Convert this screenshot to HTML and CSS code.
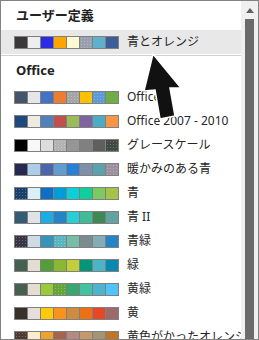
FILE: index.html
```html
<!DOCTYPE html>
<html>
  <head>
    <title>配色</title>
    <link rel="stylesheet" href="styles.css">
  </head>
  <body>
    <div class="picker">
      <div class="list">
        <div class="group-title">ユーザー定義</div>
        <div class="row selected">
          <div class="swatches">
            <span style="background:#3b3838"></span>
            <span style="background:#eeeeee"></span>
            <span style="background:#2b2be6"></span>
            <span style="background:#ffa500"></span>
            <span style="background:#fffbd0"></span>
            <span class="dots" style="background-color:#9a9fae"></span>
            <span style="background:#5fb0cc"></span>
            <span style="background:#3c5d9a"></span>
          </div>
          <span class="name">青とオレンジ</span>
        </div>
        <div class="divider"></div>

        <div class="group-title">Office</div>
        <div class="row">
          <div class="swatches">
            <span style="background:#44546a"></span>
            <span style="background:#e7e6e6"></span>
            <span style="background:#4472c4"></span>
            <span style="background:#ed7d31"></span>
            <span class="dots" style="background-color:#a5a5a5"></span>
            <span style="background:#ffc000"></span>
            <span class="dots" style="background-color:#5b9bd5"></span>
            <span style="background:#70ad47"></span>
          </div>
          <span class="name">Office</span>
        </div>
        <div class="row">
          <div class="swatches">
            <span style="background:#1f497d"></span>
            <span style="background:#eeece1"></span>
            <span style="background:#4f81bd"></span>
            <span style="background:#c0504d"></span>
            <span style="background:#9bbb59"></span>
            <span style="background:#8064a2"></span>
            <span style="background:#4bacc6"></span>
            <span style="background:#f79646"></span>
          </div>
          <span class="name">Office 2007 - 2010</span>
        </div>
        <div class="row">
          <div class="swatches">
            <span style="background:#000000"></span>
            <span style="background:#f8f8f8"></span>
            <span style="background:#dddddd"></span>
            <span class="dots" style="background-color:#b2b2b2"></span>
            <span style="background:#969696"></span>
            <span style="background:#808080"></span>
            <span style="background:#5f5f5f"></span>
            <span class="dots" style="background-color:#3e4a42"></span>
          </div>
          <span class="name">グレースケール</span>
        </div>
        <div class="row">
          <div class="swatches">
            <span style="background:#242852"></span>
            <span style="background:#acccea"></span>
            <span style="background:#4a66ac"></span>
            <span style="background:#629dd1"></span>
            <span style="background:#297fd5"></span>
            <span style="background:#7f8fa9"></span>
            <span style="background:#5aa2ae"></span>
            <span class="dots" style="background-color:#9d90a0"></span>
          </div>
          <span class="name">暖かみのある青</span>
        </div>
        <div class="row">
          <div class="swatches">
            <span class="dots" style="background-color:#17406d"></span>
            <span style="background:#dbeff9"></span>
            <span style="background:#0f6fc6"></span>
            <span style="background:#009dd9"></span>
            <span style="background:#0bd0d9"></span>
            <span style="background:#10cf9b"></span>
            <span style="background:#7cca62"></span>
            <span style="background:#a5c249"></span>
          </div>
          <span class="name">青</span>
        </div>
        <div class="row">
          <div class="swatches">
            <span style="background:#335b74"></span>
            <span style="background:#dfe3e5"></span>
            <span style="background:#1cade4"></span>
            <span style="background:#2683c6"></span>
            <span style="background:#27ced7"></span>
            <span style="background:#42ba97"></span>
            <span style="background:#3e8853"></span>
            <span style="background:#62a39f"></span>
          </div>
          <span class="name">青 II</span>
        </div>
        <div class="row">
          <div class="swatches">
            <span class="dots" style="background-color:#373545"></span>
            <span style="background:#cedbe6"></span>
            <span style="background:#3494ba"></span>
            <span class="dots" style="background-color:#58b6c0"></span>
            <span style="background:#75bda7"></span>
            <span style="background:#7a8c8e"></span>
            <span style="background:#84acb6"></span>
            <span style="background:#2683c6"></span>
          </div>
          <span class="name">青緑</span>
        </div>
        <div class="row">
          <div class="swatches">
            <span style="background:#455f51"></span>
            <span style="background:#e3ded1"></span>
            <span style="background:#549e39"></span>
            <span style="background:#8ab833"></span>
            <span style="background:#c0cf3a"></span>
            <span style="background:#029676"></span>
            <span style="background:#4ab5c4"></span>
            <span style="background:#0989b1"></span>
          </div>
          <span class="name">緑</span>
        </div>
        <div class="row">
          <div class="swatches">
            <span style="background:#455f51"></span>
            <span style="background:#e3ded1"></span>
            <span style="background:#99cb38"></span>
            <span class="dots" style="background-color:#63a537"></span>
            <span style="background:#37a76f"></span>
            <span style="background:#44c1a3"></span>
            <span style="background:#4eb3cf"></span>
            <span style="background:#51c3f9"></span>
          </div>
          <span class="name">黄緑</span>
        </div>
        <div class="row">
          <div class="swatches">
            <span style="background:#39302a"></span>
            <span style="background:#e5dedb"></span>
            <span style="background:#ffca08"></span>
            <span style="background:#f8931d"></span>
            <span style="background:#ce8d3e"></span>
            <span style="background:#ec7016"></span>
            <span style="background:#e64823"></span>
            <span style="background:#9c6a6a"></span>
          </div>
          <span class="name">黄</span>
        </div>
        <div class="row">
          <div class="swatches">
            <span class="dots" style="background-color:#4e3b30"></span>
            <span style="background:#fbeec9"></span>
            <span style="background:#f0a22e"></span>
            <span style="background:#a5644e"></span>
            <span style="background:#b58b80"></span>
            <span style="background:#c3986d"></span>
            <span style="background:#a19574"></span>
            <span style="background:#c17529"></span>
          </div>
          <span class="name">黄色がかったオレンジ</span>
        </div>
      </div>

      <div class="scrollbar">
        <div class="arrow-up"></div>
        <div class="thumb"></div>
      </div>

      <!-- mouse pointer captured in the screenshot -->
      <svg class="cursor" width="60" height="80" viewBox="0 0 60 80">
        <polygon points="23,4 14,41 25,40 30,69 45,66 40,38 51,38"
                 fill="#111" stroke="#fff" stroke-width="1.5" stroke-linejoin="miter"/>
      </svg>
    </div>
  </body>
</html>
```

FILE: styles.css
```css
body {
  margin: 0;
  font-family: "Noto Sans", "Noto Sans CJK JP", sans-serif;
  font-size: 12px;
  color: #262626;
}
.picker {
  position: relative;
  display: flex;
  width: 259px;
  height: 340px;
  box-sizing: border-box;
  border: 1px solid #828282;
  overflow: hidden;
  background: #fff;
}
.list {
  flex: 1;
  overflow: hidden;
}
.group-title {
  height: 29px;
  line-height: 29px;
  padding-left: 15px;
  font-weight: bold;
  font-size: 13px;
  color: #222;
}
.row {
  display: flex;
  align-items: center;
  gap: 8px;
  height: 24px;
  padding-left: 13px;
  white-space: nowrap;
}
.selected {
  background-color: #e8e8e8;
}
.divider {
  height: 1px;
  margin-top: 1px;
  background-color: #d0d0d0;
}
.swatches {
  display: flex;
  gap: 1px;
  padding: 1px;
  background-color: #808080;
}
.swatches span {
  width: 12px;
  height: 11px;
}
.swatches .dots {
  background-image: radial-gradient(rgba(255, 255, 255, 0.25) 0.6px, transparent 0.9px);
  background-size: 3px 3px;
}
.name {
  line-height: 16px;
}
.scrollbar {
  width: 17px;
  background-color: #f0f0f0;
  display: flex;
  flex-direction: column;
  align-items: center;
}
.arrow-up {
  margin-top: 7px;
  width: 0;
  height: 0;
  border-left: 4px solid transparent;
  border-right: 4px solid transparent;
  border-bottom: 5px solid #606060;
}
.thumb {
  margin-top: 6px;
  width: 9px;
  flex: 1;
  margin-bottom: -20px;
  background-color: #6b6b6b;
}
.cursor {
  position: absolute;
  left: 129px;
  top: 49px;
}
```
